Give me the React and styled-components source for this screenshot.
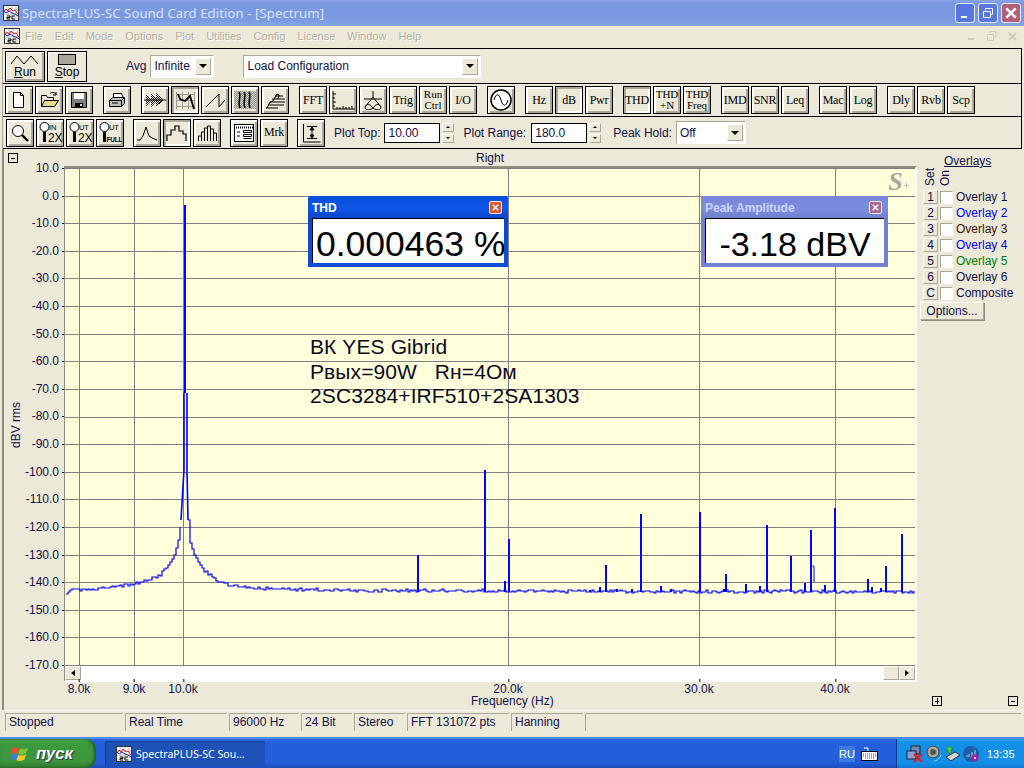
import React from "react";
import styled, { createGlobalStyle } from "styled-components";

const GlobalStyle = createGlobalStyle`
  html, body {
    margin: 0;
    padding: 0;
    background: #ece9d8;
  }
  * {
    box-sizing: border-box;
  }
`;

const face = "#ece9d8";
const uiFont = `"Liberation Sans", Arial, sans-serif`;
const serifFont = `"Liberation Serif", "Times New Roman", serif`;

const Screen = styled.div`
  width: 1024px;
  height: 768px;
  display: flex;
  flex-direction: column;
  overflow: hidden;
  background: ${face};
  font-family: ${uiFont};
  font-size: 12px;
  color: #000;
`;

/* title bar */
const TitleBar = styled.div`
  height: 26px;
  flex: none;
  display: flex;
  align-items: center;
  padding: 0 3px 0 3px;
  background: linear-gradient(#8aa3e6 0, #7a98e2 3px, #7c9ae2 20px, #86a6e8 26px);
`;

const TitleText = styled.div`
  flex: 1;
  margin-left: 3px;
  color: #d8e2f6;
  font-family: "Noto Sans", sans-serif;
  font-size: 13.1px;
  letter-spacing: 0.1px;
`;

const CaptionButton = styled.div`
  width: 20px;
  height: 20px;
  margin-left: 3px;
  border: 1px solid #e4ebfa;
  border-radius: 3px;
  display: flex;
  align-items: center;
  justify-content: center;
  background: ${(p) => (p.$close ? "#b2607a" : "#5878e0")};
`;

/* menu */
const MenuBar = styled.div`
  height: 20px;
  flex: none;
  display: flex;
  align-items: center;
  padding-left: 4px;
`;

const MenuItem = styled.span`
  margin-left: ${(p) => p.$gap}px;
  color: #aca899;
  font-size: 11px;
  text-shadow: 1px 1px 0 #fff;
  opacity: 0.9;
`;

const MdiButtons = styled.div`
  margin-left: auto;
  display: flex;
  gap: 4px;
  padding-right: 4px;
`;

const MdiButton = styled.div`
  width: 16px;
  height: 14px;
  display: flex;
  align-items: center;
  justify-content: center;
`;

/* tool rows */
const ToolRows = styled.div`
  flex: none;
  margin: 2px 2px 0 2px;
  border-top: 1px solid #000;
  border-right: 1px solid #000;
  border-left: 1px solid #aca899;
`;

const ToolRow = styled.div`
  height: ${(p) => p.$h}px;
  display: flex;
  align-items: center;
  padding-left: ${(p) => p.$pad}px;
  border-bottom: 1px solid #000;
`;

const BigButton = styled.div`
  width: ${(p) => p.$w || 40}px;
  height: 31px;
  margin-right: 2px;
  border: 1px solid #000;
  display: flex;
  flex-direction: column;
  align-items: center;
  justify-content: center;
  font-size: 12px;
  line-height: 13px;
  background: ${face};
  box-shadow: ${(p) =>
    p.$pressed
      ? "inset 1px 1px 0 #fff"
      : "inset 1px 1px 0 #fff, inset -2px -2px 0 #aca899"};
`;

const Underlined = styled.u`
  text-decoration: underline;
`;

const Field = styled.span`
  margin-left: ${(p) => p.$ml || 0}px;
  margin-right: ${(p) => p.$mr || 0}px;
  color: #10104a;
  white-space: nowrap;
`;

const Combo = styled.div`
  width: ${(p) => p.$w}px;
  height: 23px;
  margin-left: ${(p) => p.$ml || 0}px;
  display: flex;
  align-items: center;
  justify-content: space-between;
  padding: 0 2px 0 3px;
  background: #fff;
  border: 1px solid #aca899;
  border-right-color: #fff;
  border-bottom-color: #fff;
  font-size: 12px;
  color: #10104a;
`;

const ComboArrow = styled.div`
  width: 16px;
  height: 17px;
  background: ${face};
  border: 1px solid #aca899;
  border-top-color: #fff;
  border-left-color: #fff;
  display: flex;
  align-items: center;
  justify-content: center;

  &::after {
    content: "";
    border: 4px solid transparent;
    border-top: 4px solid #000;
    border-bottom: 0;
  }
`;

const ToolButton = styled.div`
  width: 28px;
  height: 28px;
  flex: none;
  margin-left: ${(p) => p.$gap ?? 2}px;
  border: 1px solid #000;
  display: flex;
  flex-direction: column;
  align-items: center;
  justify-content: center;
  font-family: ${serifFont};
  font-size: ${(p) => (p.$small ? 11 : 12)}px;
  line-height: 11px;
  letter-spacing: ${(p) => (p.$small ? 0 : -0.2)}px;
  white-space: nowrap;
  background: ${face};
  box-shadow: ${(p) =>
    p.$pressed
      ? "inset 2px 2px 0 #aca899, inset -2px -2px 0 #fff"
      : "inset 1px 1px 0 #fff, inset 2px 2px 0 #fff, inset -2px -2px 0 #aca899"};
`;

const NumberInput = styled.div`
  width: 56px;
  height: 20px;
  margin-left: ${(p) => p.$ml || 0}px;
  padding: 2px 3px;
  background: #fff;
  border: 1px solid #000;
  color: #10104a;
  font-size: 12px;
  line-height: 14px;
`;

const Spinner = styled.div`
  width: 12px;
  height: 20px;
  margin-left: 2px;
  display: flex;
  flex-direction: column;
  justify-content: space-between;
`;

const SpinPart = styled.div`
  height: 9px;
  background: ${face};
  border: 1px solid #aca899;
  border-top-color: #fff;
  border-left-color: #fff;
  display: flex;
  align-items: center;
  justify-content: center;

  &::after {
    content: "";
    border: 2px solid transparent;
    ${(p) =>
      p.$up
        ? "border-bottom: 2px solid #000; border-top: 0;"
        : "border-top: 2px solid #000; border-bottom: 0;"}
  }
`;

/* spectrum panel */
const Panel = styled.div`
  flex: none;
  height: 561px;
  display: flex;
  margin-left: 2px;
  border-left: 2px solid #8e8c80;
  position: relative;
`;

const PlotColumn = styled.div`
  width: 914px;
  flex: none;
  display: flex;
  flex-direction: column;
`;

const PanelHead = styled.div`
  height: 18px;
  flex: none;
  display: flex;
  align-items: center;
  padding-left: 4px;
`;

const HeadTitle = styled.div`
  position: absolute;
  left: 472px;
  top: 2px;
  color: #10104a;
`;

const BoxButton = styled.div`
  width: 10px;
  height: 10px;
  border: 1px solid #000;
  background: ${face};
  display: flex;
  align-items: center;
  justify-content: center;
  position: relative;

  &::before {
    content: "";
    width: 4px;
    height: 1px;
    background: #000;
    position: absolute;
  }
  ${(p) =>
    p.$plus &&
    `&::after { content: ""; width: 1px; height: 6px; background: #000; position: absolute; }`}
`;

const PlotBody = styled.div`
  display: flex;
  height: 515px;
  flex: none;
`;

const YTitleBox = styled.div`
  width: 19px;
  flex: none;
  display: flex;
  align-items: center;
  justify-content: center;
  padding: 2px 0 0 5px;
`;

const YTitle = styled.span`
  writing-mode: vertical-rl;
  transform: rotate(180deg);
  color: #10104a;
`;

const YTicks = styled.div`
  width: 39px;
  flex: none;
  height: 511px;
  margin-top: -6px;
  padding-right: 3px;
  display: flex;
  flex-direction: column;
  justify-content: space-between;
  align-items: flex-end;
`;

const YTick = styled.div`
  height: 14px;
  line-height: 14px;
  color: #10104a;
  position: relative;

  &::after {
    content: "";
    position: absolute;
    left: 100%;
    top: 7px;
    margin-left: 3px;
    width: 3px;
    height: 1px;
    background: #000;
  }
`;

const PlotFrame = styled.div`
  width: 853px;
  flex: none;
  margin-left: 2px;
  margin-top: -1px;
  display: flex;
  flex-direction: column;
  border-top: 2px solid #8e8c80;
  border-left: 1px solid #8e8c80;
  background: #ffffdc;
  border-right: 2px solid #fff;
  border-bottom: 2px solid #fff;
  position: relative;
`;

const PlotSvg = styled.svg`
  display: block;
  width: 850px;
  height: 498px;
  flex: none;
`;

const ScrollTrack = styled.div`
  height: 14px;
  flex: none;
  display: flex;
  justify-content: space-between;
  background-color: #fff;
  background-image: radial-gradient(#d4d0c0 0.6px, transparent 0.7px);
  background-size: 2px 2px;
`;

const ScrollButton = styled.div`
  width: 16px;
  height: 14px;
  background: ${face};
  border: 1px solid #aca899;
  border-top-color: #fff;
  border-left-color: #fff;
  display: flex;
  align-items: center;
  justify-content: center;

  ${(p) =>
    p.$dir &&
    `&::after {
    content: "";
    border: 3px solid transparent;
    ${p.$dir === "left" ? "border-right: 4px solid #000; border-left: 0;" : "border-left: 4px solid #000; border-right: 0;"}
  }`}
`;

const ScrollEnd = styled.div`
  display: flex;
`;

const XAxis = styled.div`
  height: 28px;
  flex: none;
  position: relative;
`;

const XTick = styled.div`
  position: absolute;
  top: 1px;
  transform: translateX(-50%);
  color: #10104a;
  line-height: 12px;

  &::before {
    content: "";
    position: absolute;
    left: 50%;
    top: -4px;
    width: 1px;
    height: 3px;
    background: #000;
  }
`;

const XTitle = styled.div`
  position: absolute;
  left: 467px;
  top: 13px;
  color: #10104a;
  line-height: 12px;
`;

const Floating = styled.div`
  position: absolute;
  left: ${(p) => p.$x}px;
  top: ${(p) => p.$y}px;
  width: ${(p) => p.$w}px;
  height: 71px;
  padding: 0 4px 4px;
  border-radius: 2px 2px 0 0;
  display: flex;
  flex-direction: column;
  background: ${(p) =>
    p.$active
      ? "linear-gradient(#0a4fdc, #0f55e8 12px, #0a46c8 22px, #0f4fd8)"
      : "linear-gradient(#7886d8, #7b8de0 12px, #7080d0 22px, #7480d4)"};
`;

const FloatTitle = styled.div`
  height: 22px;
  flex: none;
  display: flex;
  align-items: center;
  justify-content: space-between;
  padding: 2px 2px 0 0;
  font-size: 12px;
  font-weight: bold;
  color: ${(p) => (p.$active ? "#fff" : "#ccd4f2")};
`;

const FloatClose = styled.div`
  width: 13px;
  height: 13px;
  margin-top: -2px;
  border: 1px solid #f0f0f0;
  border-radius: 2px;
  background: ${(p) => (p.$active ? "#d8583a" : "#a86a90")};
  display: flex;
  align-items: center;
  justify-content: center;
`;

const FloatValue = styled.div`
  flex: 1;
  background: #fff;
  border-top: 1px solid #000;
  border-left: 1px solid #000;
  display: flex;
  align-items: center;
  justify-content: ${(p) => (p.$center ? "center" : "flex-start")};
  padding: 6px 0 0 ${(p) => (p.$center ? 0 : 3)}px;
  font-size: ${(p) => p.$size}px;
  white-space: nowrap;
  overflow: hidden;
`;

const Note = styled.div`
  position: absolute;
  left: 306px;
  top: 186px;
  font-size: 21px;
  line-height: 24.5px;
  letter-spacing: 0.1px;
  color: #0a0a20;
  white-space: pre;
`;

const Logo = styled.div`
  position: absolute;
  right: 5px;
  top: 1px;
  color: #a8a89a;
  font-family: ${serifFont};
  font-weight: bold;
  font-style: italic;
  font-size: 26px;
  line-height: 26px;

  small {
    font-size: 13px;
    font-weight: normal;
    font-style: normal;
  }
`;

/* overlay side panel */
const OverlayPanel = styled.div`
  flex: 1;
  display: flex;
  flex-direction: column;
  padding-left: 2px;
  position: relative;
`;

const OverlayHead = styled.div`
  height: 11px;
  padding-left: 24px;
  margin-top: 6px;
  text-decoration: underline;
  color: #10104a;
  line-height: 12px;
  white-space: nowrap;
`;

const SetOnRow = styled.div`
  display: flex;
  gap: 3px;
  padding-left: 4px;
  height: 20px;
  margin-bottom: 3px;
`;

const Rotated = styled.span`
  writing-mode: vertical-rl;
  transform: rotate(180deg);
  width: 12px;
  line-height: 12px;
  color: #10104a;
`;

const OverlayRow = styled.div`
  height: 16px;
  display: flex;
  align-items: center;
  padding-left: 3px;
`;

const SetButton = styled.div`
  width: 15px;
  height: 14px;
  background: ${face};
  border: 1px solid #aca899;
  border-top-color: #fff;
  border-left-color: #fff;
  display: flex;
  align-items: center;
  justify-content: center;
  color: #10104a;
  font-size: 12px;
`;

const Check = styled.div`
  width: 13px;
  height: 13px;
  margin-left: 2px;
  background: #fff;
  border: 1px solid #aca899;
  border-right-color: #fff;
  border-bottom-color: #fff;
`;

const OverlayLabel = styled.span`
  margin-left: 3px;
  color: ${(p) => p.$color};
  white-space: nowrap;
`;

const OptionsButton = styled.div`
  width: 64px;
  height: 18px;
  margin-top: 1px;
  background: ${face};
  border: 1px solid #aca899;
  border-top-color: #fff;
  border-left-color: #fff;
  box-shadow: 1px 1px 0 #8e8c80;
  text-align: center;
  line-height: 16px;
  color: #10104a;
`;

const ZoomButtons = styled.div`
  margin-top: auto;
  margin-bottom: 4px;
  display: flex;
  justify-content: space-between;
  padding: 0 6px 0 12px;
`;

/* status */
const StatusBar = styled.div`
  flex: none;
  height: 27px;
  padding: 2px 3px 0 5px;
  border-top: 1px solid #fff;
  display: flex;
  gap: 2px;
`;

const StatusCell = styled.div`
  width: ${(p) => p.$w}px;
  flex: ${(p) => (p.$fill ? 1 : "none")};
  height: 18px;
  padding-left: 3px;
  border-top: 1px solid #aca899;
  border-left: 1px solid #aca899;
  line-height: 16px;
  color: #10104a;
  white-space: nowrap;
`;

/* taskbar */
const Taskbar = styled.div`
  flex: none;
  margin-top: auto;
  height: 31px;
  display: flex;
  align-items: center;
  border-top: 2px solid #4f8af0;
  background: linear-gradient(#2b6be6 0, #245edb 4px, #245edb 24px, #1c4cb8 29px);
  font-family: ${uiFont};
  color: #fff;
`;

const StartButton = styled.div`
  width: 96px;
  height: 29px;
  display: flex;
  align-items: center;
  padding-left: 10px;
  gap: 6px;
  border-radius: 0 10px 10px 0;
  background: linear-gradient(#4fa34f 0, #3c9a3c 5px, #3d963d 22px, #2e7a2e);
  box-shadow: inset -2px 0 3px #1e5a1e;
  font-size: 16.5px;
  font-weight: bold;
  font-style: italic;
  text-shadow: 1px 1px 1px #234;
`;

const TaskItem = styled.div`
  width: 160px;
  height: 25px;
  margin-left: 9px;
  padding-left: 11px;
  display: flex;
  align-items: center;
  gap: 4px;
  border-radius: 2px;
  background: #1e52b7;
  box-shadow: inset 1px 1px 1px #17408e;
  font-family: "Noto Sans", sans-serif;
  font-size: 10.6px;
`;

const Lang = styled.div`
  margin-left: auto;
  width: 16px;
  height: 16px;
  background: #3c7ae2;
  text-align: center;
  font-size: 11px;
  line-height: 16px;
`;

const KeyboardBox = styled.div`
  margin: 0 18px 0 6px;
  display: flex;
`;

const Tray = styled.div`
  width: 128px;
  height: 29px;
  display: flex;
  align-items: center;
  padding-left: 9px;
  gap: 2px;
  background: linear-gradient(#1a9cf0 0, #1290e8 4px, #1290e8 24px, #0f7ad0);
  border-left: 1px solid #10388c;
`;

const Clock = styled.span`
  margin-left: 5px;
  font-size: 11px;
`;

/* icons */
const Ico = ({ children, w = 20, h = 20, sw = 1 }) => (
  <svg width={w} height={h} viewBox={`0 0 ${w} ${h}`} fill="none" stroke="#000" strokeWidth={sw}>
    {children}
  </svg>
);

const AppIcon = ({ size = 16 }) => (
  <svg width={size} height={size} viewBox="0 0 16 16">
    <rect x="0.5" y="0.5" width="15" height="15" fill="#fff" stroke="#333" />
    <path d="M1 9h14M1 5h14M5 1v14M9 1v14M13 1v14" stroke="#999" strokeWidth="0.6" />
    <path d="M1 7l2-3 2 2 2-3 3 3 2-1 3 4" stroke="#d22" fill="none" />
    <path d="M1 6l2 2 3-2 3 2 3 1 3 2" stroke="#22c" fill="none" />
    <rect x="3" y="10" width="10" height="5" fill="#ddd" />
    <path d="M4 11h3v1.5H4V14h3M12 11H9v3h3" stroke="#000" fill="none" strokeWidth="0.9" />
  </svg>
);

const Dither = ({ id, a = "#000", b = "none" }) => (
  <pattern id={id} width="2" height="2" patternUnits="userSpaceOnUse" stroke="none">
    <rect width="2" height="2" fill={b} stroke="none" />
    <rect width="1" height="1" fill={a} stroke="none" />
    <rect x="1" y="1" width="1" height="1" fill={a} stroke="none" />
  </pattern>
);

const icons = {
  page: (
    <Ico>
      <path d="M4.5 2.5h7l3 3v12h-10zM11.5 2.5v3h3" fill="#fff" />
    </Ico>
  ),
  open: (
    <Ico>
      <path d="M2.5 16.5v-11h5l1 2h6v3" />
      <path d="M2.5 16.5l3-6h14l-4 6z" fill="#e8d890" />
      <path d="M11 3.5c2-2 5-1 6 1M17 2v3h-3" />
    </Ico>
  ),
  save: (
    <Ico>
      <path d="M2.5 2.5h15v15h-15z" fill="#808080" />
      <path d="M5 3h10v6H5z" fill="#fff" stroke="none" />
      <path d="M6 13h8v4H6z" fill="#000" stroke="none" />
      <path d="M11 14h2v2h-2z" fill="#ddd" stroke="none" />
    </Ico>
  ),
  print: (
    <Ico>
      <path d="M6.5 3.5h8l2 5h-10z" fill="#fff" />
      <path d="M2.5 10.5l3-3h12v6l-3 3h-12z" fill="#bbb" />
      <path d="M2.5 10.5h12v6M14.5 10.5l3-3M5 13h6" />
    </Ico>
  ),
  arrows: (
    <Ico w={24}>
      <defs><Dither id="arrowDots" /></defs>
      <path d="M1 10h22" />
      <path d="M3 4l6 6-6 6zM8 3l7 7-7 7zM13 3l7 7-7 7z" fill="url(#arrowDots)" stroke="none" />
      <path d="M20 10l-4-4M20 10l-4 4" />
    </Ico>
  ),
  spectrum: (
    <Ico w={24}>
      <path d="M3 4.5h19M3 10.5h19M3 16.5h19M3.5 2v17M9.5 2v17M15.5 2v17M21.5 2v17" stroke="#a09c8c" />
      <path d="M5 4l2 5 5 2 5-5 4 13" strokeWidth="1.8" />
    </Ico>
  ),
  saw: (
    <Ico>
      <path d="M1 17L14 4v13L20 10" />
    </Ico>
  ),
  waterfall: (
    <Ico w={24}>
      <defs><Dither id="fallDots" a="#8c8c80" b="#d8d8cc" /></defs>
      <rect x="1" y="1" width="22" height="18" fill="url(#fallDots)" stroke="none" />
      <path d="M6 2c3 4-2 9 1 16M11 2c3 4-2 9 1 16M16 2c3 4-2 9 1 16" strokeWidth="1.5" />
    </Ico>
  ),
  stack: (
    <Ico w={24}>
      <path d="M3 18h12M5 15h16M7 12h15M9 9h13M12 6h8" />
      <path d="M4 18l3-6 3-1 4-7 2 1-1 4" />
    </Ico>
  ),
  axis: (
    <Ico w={26}>
      <path d="M3 1v18h22" />
      <path d="M3 4h3M3 8h2M3 12h3M3 16h2M7 19v-2M10 19v-2M13 19v-3M16 19v-2M19 19v-2M22 19v-3" />
    </Ico>
  ),
  window: (
    <Ico w={24}>
      <path d="M12 1v6M12 7l-8 10M12 7l8 10" />
      <path d="M3 9h18" />
      <path d="M4 17c2-4 5-3 8 1 3-4 6-5 8-1 0 3-4 4-8 1-4 3-8 2-8-1z" />
    </Ico>
  ),
  scope: (
    <svg width="24" height="24" viewBox="0 0 24 24" fill="none" stroke="#000">
      <circle cx="12" cy="12" r="10" fill="#fff" strokeWidth="1.5" />
      <path d="M5 12c2-7 5-7 7 0s5 7 7 0" />
    </svg>
  ),
  zoom: (
    <Ico>
      <circle cx="8" cy="8" r="5.5" fill="#fff" />
      <path d="M12 12l6 6" strokeWidth="2.4" />
    </Ico>
  ),
  peak: (
    <Ico w={24}>
      <path d="M2 17h3l3-4 3-9 3 9 3 2 5 2" />
    </Ico>
  ),
  step: (
    <Ico w={24}>
      <path d="M2 18v-6h4V7h4V3h4v5h4v3h3v7" strokeWidth="1.2" />
    </Ico>
  ),
  bars: (
    <Ico w={24}>
      <path d="M3.5 18v-5h3v5M6.5 18V9h3v9M9.5 18V5h3v13M12.5 18V3h3v15M15.5 18V6h3v12M18.5 18v-8h3v8" />
    </Ico>
  ),
  list: (
    <Ico w={24}>
      <rect x="2.5" y="1.5" width="19" height="17" fill="#fff" />
      <path d="M2 4.5h20" strokeWidth="2" strokeDasharray="1 1" />
      <path d="M11.5 7.5h8v2h-8zM11.5 11.5h8v2h-8zM11.5 15.5h8M5 9h3M5 13h3" />
    </Ico>
  ),
  range: (
    <Ico>
      <path d="M2.5 1v18h17" />
      <path d="M6 3.5h10M6 15.5h10M11 3v13" />
      <path d="M9 7l2-3 2 3zM9 12l2 3 2-3z" fill="#000" />
    </Ico>
  ),
};

const ZoomLabel = ({ top, bottom, small }) => (
  <svg width="26" height="26" viewBox="0 0 26 26" fill="none" stroke="#000">
    <circle cx="7.5" cy="7" r="4.5" fill="#fff" />
    <path d="M7.5 12v10" strokeWidth="3" />
    <text x="12" y="10" fontFamily={uiFont} fontSize="7.5" fill="#000" stroke="none">
      {top}
    </text>
    <text x={small ? 9.5 : 11} y="22" fontFamily={uiFont} fontSize={small ? 6.5 : 12} fontWeight={small ? "bold" : "normal"} fill="#000" stroke="none">
      {bottom}
    </text>
  </svg>
);

/* spectrum data */
const gridY = Array.from({ length: 19 }, (_, i) => 168 + (i * 497) / 18);
const gridX = [79, 134, 183, 508, 699, 835];
const xLabels = [
  [79, "8.0k"],
  [134, "9.0k"],
  [183, "10.0k"],
  [508, "20.0k"],
  [699, "30.0k"],
  [835, "40.0k"],
];

const skirt = [
  [66, 593.5],
  [70, 590.5],
  [100, 589],
  [133, 584],
  [150, 579],
  [160, 575],
  [170, 563],
  [175, 553],
  [178, 540],
  [181, 520],
];
const skirtRight = [
  [188, 520],
  [190, 543],
  [195, 557],
  [203, 570],
  [217, 580],
  [227, 585],
  [260, 588.5],
  [360, 590.5],
  [915, 592],
];

const peaks = [
  [418, 555], [485, 470], [505, 581], [509, 539], [590, 590], [600, 587],
  [606, 565], [617, 589], [632, 589], [641, 514], [661, 586], [671, 589],
  [700, 512], [724, 589], [726, 574], [746, 584], [760, 586], [767, 525],
  [791, 556], [805, 583], [811, 530], [825, 585], [835, 508], [868, 579],
  [872, 587], [881, 588], [886, 566], [902, 534],
];

function noise(i) {
  const v = Math.sin(i * 12.9898) * 43758.5453;
  return v - Math.floor(v);
}

function lerp(pts, x) {
  for (let i = 1; i < pts.length; i++) {
    if (x <= pts[i][0]) {
      const [x0, y0] = pts[i - 1];
      const [x1, y1] = pts[i];
      return y0 + ((x - x0) / (x1 - x0)) * (y1 - y0);
    }
  }
  return pts[pts.length - 1][1];
}

// stepped trace, two pixels a step like the bins on a screen
function buildTrace() {
  let left = "";
  for (let x = 66; x <= 181; x += 2) {
    const y = Math.round(lerp(skirt, x) + (noise(x) - 0.5) * (x < 172 ? 3 : 1));
    left += x === 66 ? `M${x} ${y}` : `H${x}V${y}`;
  }
  let right = "";
  for (let x = 188; x <= 914; x += 2) {
    const y = Math.round(lerp(skirtRight, x) + (noise(x) - 0.5) * (x > 198 ? 3 : 1));
    right += x === 188 ? `M${x} ${y}` : `H${x}V${y}`;
  }
  return left + right;
}

const tracePath = buildTrace();

const ButtonText = ({ lines }) =>
  lines.map((l) => <span key={l}>{l}</span>);

const row2 = [
  { i: "page" }, { i: "open" }, { i: "save" },
  { i: "print", gap: 10 },
  { i: "arrows", gap: 10 }, { i: "spectrum", pressed: true }, { i: "saw" }, { i: "waterfall" }, { i: "stack" },
  { t: ["FFT"], gap: 10 }, { i: "axis" }, { i: "window" }, { t: ["Trig"] }, { t: ["Run", "Ctrl"], small: true }, { t: ["I/O"] },
  { i: "scope", gap: 10 },
  { t: ["Hz"], gap: 10 }, { t: ["dB"], pressed: true }, { t: ["Pwr"] },
  { t: ["THD"], gap: 10, pressed: true }, { t: ["THD", "+N"], small: true }, { t: ["THD", "Freq"], small: true },
  { t: ["IMD"], gap: 10 }, { t: ["SNR"] }, { t: ["Leq"] },
  { t: ["Mac"], gap: 10 }, { t: ["Log"] },
  { t: ["Dly"], gap: 10 }, { t: ["Rvb"] }, { t: ["Scp"] },
];

const overlays = [
  ["1", "Overlay 1", "#10104a"],
  ["2", "Overlay 2", "#0000ff"],
  ["3", "Overlay 3", "#401010"],
  ["4", "Overlay 4", "#0000ff"],
  ["5", "Overlay 5", "#008000"],
  ["6", "Overlay 6", "#10104a"],
  ["C", "Composite", "#10104a"],
];

const menus = [
  ["File", 21], ["Edit", 12], ["Mode", 12], ["Options", 12], ["Plot", 12], ["Utilities", 12],
  ["Config", 12], ["License", 12], ["Window", 12], ["Help", 12],
];

const status = [
  ["Stopped", 118], ["Real Time", 102], ["96000 Hz", 70], ["24 Bit", 51],
  ["Stereo", 51], ["FFT 131072 pts", 102], ["Hanning", 72],
];

const CloseX = ({ color = "#fff", size = 9 }) => (
  <svg width={size} height={size} viewBox="0 0 9 9" stroke={color} strokeWidth="2">
    <path d="M1 1l7 7M8 1L1 8" />
  </svg>
);

const Flag = () => (
  <svg width="20" height="18" viewBox="0 0 22 20">
    <path d="M2 4c3-2 5-1 8 0l-2 6c-2-1-5-2-8 0z" fill="#e8502a" />
    <path d="M11 4c3 1 5 1 9-1l-2 6c-4 2-6 2-9 1z" fill="#7cc63a" />
    <path d="M0 11c3-2 5-1 7 0l-2 6c-2-1-5-2-7 0z" fill="#3a7ee8" transform="translate(2 0)" />
    <path d="M9 11c3 1 5 1 9-1l-2 6c-4 2-6 2-9 1z" fill="#f6c628" />
  </svg>
);

export default function App() {
  return (
    <>
      <GlobalStyle />
      <Screen>
        <TitleBar>
          <AppIcon />
          <TitleText>SpectraPLUS-SC Sound Card Edition - [Spectrum]</TitleText>
          <CaptionButton>
            <svg width="12" height="12" viewBox="0 0 12 12"><path d="M2 9h6v2H2z" fill="#fff" /></svg>
          </CaptionButton>
          <CaptionButton>
            <svg width="12" height="12" viewBox="0 0 12 12" fill="none" stroke="#fff">
              <path d="M3.5 3.5V1.5h7v6h-2" />
              <path d="M1.5 4.5h7v6h-7z" />
            </svg>
          </CaptionButton>
          <CaptionButton $close>
            <CloseX size={12} />
          </CaptionButton>
        </TitleBar>

        <MenuBar>
          <AppIcon />
          {menus.map(([m, g], i) => (
            <MenuItem key={m} $gap={i === 0 ? 5 : g}>{m}</MenuItem>
          ))}
          <MdiButtons>
            <MdiButton>
              <svg width="10" height="10" viewBox="0 0 10 10"><path d="M1 7h6v2H1z" fill="#cfccbc" /></svg>
            </MdiButton>
            <MdiButton>
              <svg width="10" height="10" fill="none" stroke="#cfccbc" viewBox="0 0 10 10"><path d="M3 2V.5h6v5H7.5M.5 3.5h6v6h-6z" /></svg>
            </MdiButton>
            <MdiButton>
              <CloseX color="#cfccbc" />
            </MdiButton>
          </MdiButtons>
        </MenuBar>

        <ToolRows>
          <ToolRow $h={35} $pad={2}>
            <BigButton>
              <svg width="30" height="12" viewBox="0 0 30 12" fill="none" stroke="#000">
                <path d="M1 10l6-8 7 8 7-8 7 8" />
              </svg>
              <span><Underlined>R</Underlined>un</span>
            </BigButton>
            <BigButton $pressed>
              <svg width="26" height="12" viewBox="0 0 26 12">
                <rect x="4.5" y="0.5" width="17" height="10" fill="#aca899" stroke="#000" />
              </svg>
              <span><Underlined>S</Underlined>top</span>
            </BigButton>
            <Field $ml={37}>Avg</Field>
            <Combo $w={64} $ml={4}>Infinite<ComboArrow /></Combo>
            <Combo $w={238} $ml={29}>Load Configuration<ComboArrow /></Combo>
          </ToolRow>
          <ToolRow $h={33} $pad={0}>
            {row2.map((b, idx) => (
              <ToolButton key={idx} $gap={b.gap} $pressed={b.pressed} $small={b.small}>
                {b.i ? icons[b.i] : <ButtonText lines={b.t} />}
              </ToolButton>
            ))}
          </ToolRow>
          <ToolRow $h={32} $pad={0}>
            <ToolButton $gap={3}>{icons.zoom}</ToolButton>
            <ToolButton><ZoomLabel top="IN" bottom="2X" /></ToolButton>
            <ToolButton><ZoomLabel top="UT" bottom="2X" /></ToolButton>
            <ToolButton><ZoomLabel top="UT" bottom="FULL" small /></ToolButton>
            <ToolButton $gap={9}>{icons.peak}</ToolButton>
            <ToolButton $pressed>{icons.step}</ToolButton>
            <ToolButton>{icons.bars}</ToolButton>
            <ToolButton $gap={9}>{icons.list}</ToolButton>
            <ToolButton><span>Mrk</span></ToolButton>
            <ToolButton $gap={9}>{icons.range}</ToolButton>
            <Field $ml={9} $mr={4}>Plot Top:</Field>
            <NumberInput>10.00</NumberInput>
            <Spinner><SpinPart $up /><SpinPart /></Spinner>
            <Field $ml={9} $mr={5}>Plot Range:</Field>
            <NumberInput>180.0</NumberInput>
            <Spinner><SpinPart $up /><SpinPart /></Spinner>
            <Field $ml={12}>Peak Hold:</Field>
            <Combo $w={70} $ml={4}>Off<ComboArrow /></Combo>
          </ToolRow>
        </ToolRows>

        <Panel>
          <PlotColumn>
            <PanelHead>
              <BoxButton />
              <HeadTitle>Right</HeadTitle>
            </PanelHead>
            <PlotBody>
              <YTitleBox>
                <YTitle>dBV rms</YTitle>
              </YTitleBox>
              <YTicks>
                {gridY.map((_, i) => (
                  <YTick key={i}>{(10 - i * 10).toFixed(1)}</YTick>
                ))}
              </YTicks>
              <PlotFrame>
                <PlotSvg viewBox="65 168 850 498">
                  {gridY.map((y) => (
                    <path key={y} d={`M65 ${Math.round(y) + 0.5}H915`} stroke="#808080" />
                  ))}
                  {gridX.map((x) => (
                    <path key={x} d={`M${x + 0.5} 168V666`} stroke="#808080" />
                  ))}
                  <path d={tracePath} fill="none" stroke="#0000ff" strokeWidth="1.2" />
                  <path d="M185 205V393" stroke="#0000ff" strokeWidth="2" fill="none" />
                  <path d="M184 393V470L181 520M187 393V470L188 520" stroke="#0000ff" strokeWidth="1.6" fill="none" />
                  {peaks.map(([x, y]) => (
                    <path key={x} d={`M${x} ${y}V592`} stroke="#0000ff" strokeWidth="2" />
                  ))}
                  <path d="M812.5 566h1.5V582" stroke="#0000ff" fill="none" />
                </PlotSvg>
                <ScrollTrack>
                  <ScrollButton $dir="left" />
                  <ScrollEnd>
                    <ScrollButton />
                    <ScrollButton $dir="right" />
                  </ScrollEnd>
                </ScrollTrack>
                <Logo>S<small>+</small></Logo>
              </PlotFrame>
            </PlotBody>
            <XAxis>
              {xLabels.map(([x, t]) => (
                <XTick key={t} style={{ left: x - 4 }}>{t}</XTick>
              ))}
              <XTitle>Frequency (Hz)</XTitle>
            </XAxis>
          </PlotColumn>

          <Floating $x={304} $y={47} $w={200} $active>
            <FloatTitle $active>THD<FloatClose $active><CloseX size={7} /></FloatClose></FloatTitle>
            <FloatValue $size={35.5}>0.000463 %</FloatValue>
          </Floating>
          <Floating $x={697} $y={47} $w={187}>
            <FloatTitle>Peak Amplitude<FloatClose><CloseX size={7} /></FloatClose></FloatTitle>
            <FloatValue $center $size={34}>-3.18 dBV</FloatValue>
          </Floating>
          <Note>{"ВК YES Gibrid\nРвых=90W   Rн=4Ом\n2SC3284+IRF510+2SA1303"}</Note>

          <OverlayPanel>
            <OverlayHead>Overlays</OverlayHead>
            <SetOnRow>
              <Rotated>Set</Rotated>
              <Rotated>On</Rotated>
            </SetOnRow>
            {overlays.map(([n, label, color]) => (
              <OverlayRow key={n}>
                <SetButton>{n}</SetButton>
                <Check />
                <OverlayLabel $color={color}>{label}</OverlayLabel>
              </OverlayRow>
            ))}
            <OptionsButton>Options...</OptionsButton>
            <ZoomButtons>
              <BoxButton $plus />
              <BoxButton />
            </ZoomButtons>
          </OverlayPanel>
        </Panel>

        <StatusBar>
          {status.map(([t, w]) => (
            <StatusCell key={t} $w={w}>{t}</StatusCell>
          ))}
          <StatusCell $fill />
        </StatusBar>

        <Taskbar>
          <StartButton><Flag />пуск</StartButton>
          <TaskItem><AppIcon />SpectraPLUS-SC Sou...</TaskItem>
          <Lang>RU</Lang>
          <KeyboardBox>
            <svg width="17" height="14" viewBox="0 0 17 14">
              <path d="M3 1h4v3" stroke="#fff" fill="none" />
              <rect x="0.5" y="4.5" width="16" height="9" fill="#fff" stroke="#000" />
              <path d="M2 7h13M2 9h13M4 11h9" stroke="#444" strokeDasharray="1 1" />
            </svg>
          </KeyboardBox>
          <Tray>
            <svg width="18" height="18" viewBox="0 0 18 18">
              <rect x="5" y="1" width="9" height="8" fill="#7088b8" stroke="#223" />
              <rect x="1" y="6" width="9" height="8" fill="#8ca0d0" stroke="#223" />
              <path d="M8 9l8 8M16 9l-8 8" stroke="#e02020" strokeWidth="2.4" />
            </svg>
            <svg width="16" height="18" viewBox="0 0 16 18">
              <circle cx="7" cy="7" r="6" fill="#a8a8a0" stroke="#444" />
              <circle cx="7" cy="7" r="3" fill="#555" />
              <path d="M8 16c3 0 6-3 7-6" stroke="#9cc4f0" fill="none" />
            </svg>
            <svg width="17" height="18" viewBox="0 0 17 18">
              <path d="M5 1l4 3-2 1v3H4V5H2z" fill="#5ac83a" stroke="#174" strokeWidth="0.5" />
              <path d="M2 12l9-5 5 3-9 6z" fill="#d8d8d0" stroke="#333" />
            </svg>
            <svg width="17" height="18" viewBox="0 0 17 18">
              <circle cx="8" cy="9" r="8" fill="#1c5ca8" />
              <path d="M3 11h2M6 9v3M9 7v5M12 5v7" stroke="#a8c8e8" />
              <circle cx="12" cy="13" r="3.5" fill="#a020a0" />
              <circle cx="12" cy="13" r="1" fill="#fff" />
            </svg>
            <Clock>13:35</Clock>
          </Tray>
        </Taskbar>
      </Screen>
    </>
  );
}
